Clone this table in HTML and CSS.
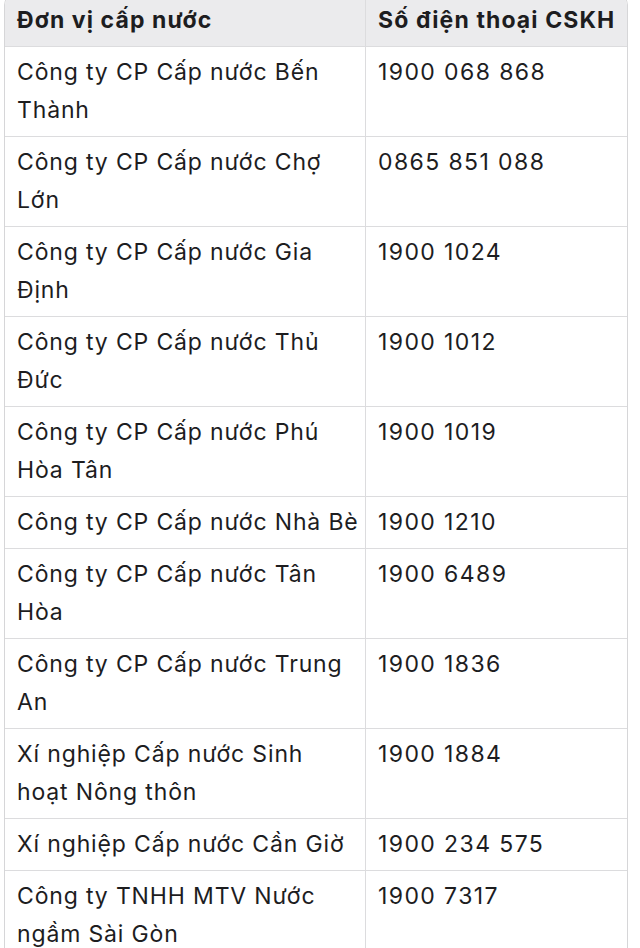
FILE: index.html
```html
<!DOCTYPE html>
<html lang="vi">
<head>
<meta charset="utf-8">
<title>Đơn vị cấp nước</title>
<link rel="stylesheet" href="styles.css">
</head>
<body>
<div class="table-wrap">
  <table class="water-table">
    <thead>
      <tr><th class="col-name">Đơn vị cấp nước</th><th class="col-phone">Số điện thoại CSKH</th></tr>
    </thead>
    <tbody>
      <tr><td>Công ty CP Cấp nước Bến<br>Thành</td><td>1900 068 868</td></tr>
      <tr><td>Công ty CP Cấp nước Chợ<br>Lớn</td><td>0865 851 088</td></tr>
      <tr><td>Công ty CP Cấp nước Gia<br>Định</td><td>1900 1024</td></tr>
      <tr><td>Công ty CP Cấp nước Thủ<br>Đức</td><td>1900 1012</td></tr>
      <tr><td>Công ty CP Cấp nước Phú<br>Hòa Tân</td><td>1900 1019</td></tr>
      <tr><td>Công ty CP Cấp nước Nhà Bè</td><td>1900 1210</td></tr>
      <tr><td>Công ty CP Cấp nước Tân<br>Hòa</td><td>1900 6489</td></tr>
      <tr><td>Công ty CP Cấp nước Trung<br>An</td><td>1900 1836</td></tr>
      <tr><td>Xí nghiệp Cấp nước Sinh<br>hoạt Nông thôn</td><td>1900 1884</td></tr>
      <tr><td>Xí nghiệp Cấp nước Cần Giờ</td><td>1900 234 575</td></tr>
      <tr><td>Công ty TNHH MTV Nước<br>ngầm Sài Gòn</td><td>1900 7317</td></tr>
    </tbody>
  </table>
</div>
</body>
</html>
```
FILE: styles.css
```css
html, body {
  margin: 0;
  padding: 0;
  background: #ffffff;
}
body {
  font-family: Inter, "Liberation Sans", sans-serif;
  color: #1d1d1f;
}
.table-wrap {
  margin: -6px 0 0 4px;
  width: 622px;
  border: 1px solid #d6d6d8;
  border-radius: 11px;
  overflow: hidden;
}
.water-table {
  width: 100%;
  border-collapse: collapse;
  font-size: 23px;
  line-height: 38px;
  letter-spacing: 0.85px;
}
.water-table th,
.water-table td {
  padding: 6px 6px 7px 12px;
  text-align: left;
  vertical-align: top;
  white-space: nowrap;
  border-bottom: 1px solid #dcdcde;
}
.water-table th {
  background: #ebebed;
  font-weight: 700;
  letter-spacing: 1.1px;
}
.water-table td {
  font-weight: 400;
}
.water-table td:last-child {
  letter-spacing: 1.4px;
}
.water-table .col-name,
.water-table td:first-child {
  width: 342px;
  border-right: 1px solid #dcdcde;
}
.water-table tbody tr:last-child td {
  border-bottom: none;
}
```
